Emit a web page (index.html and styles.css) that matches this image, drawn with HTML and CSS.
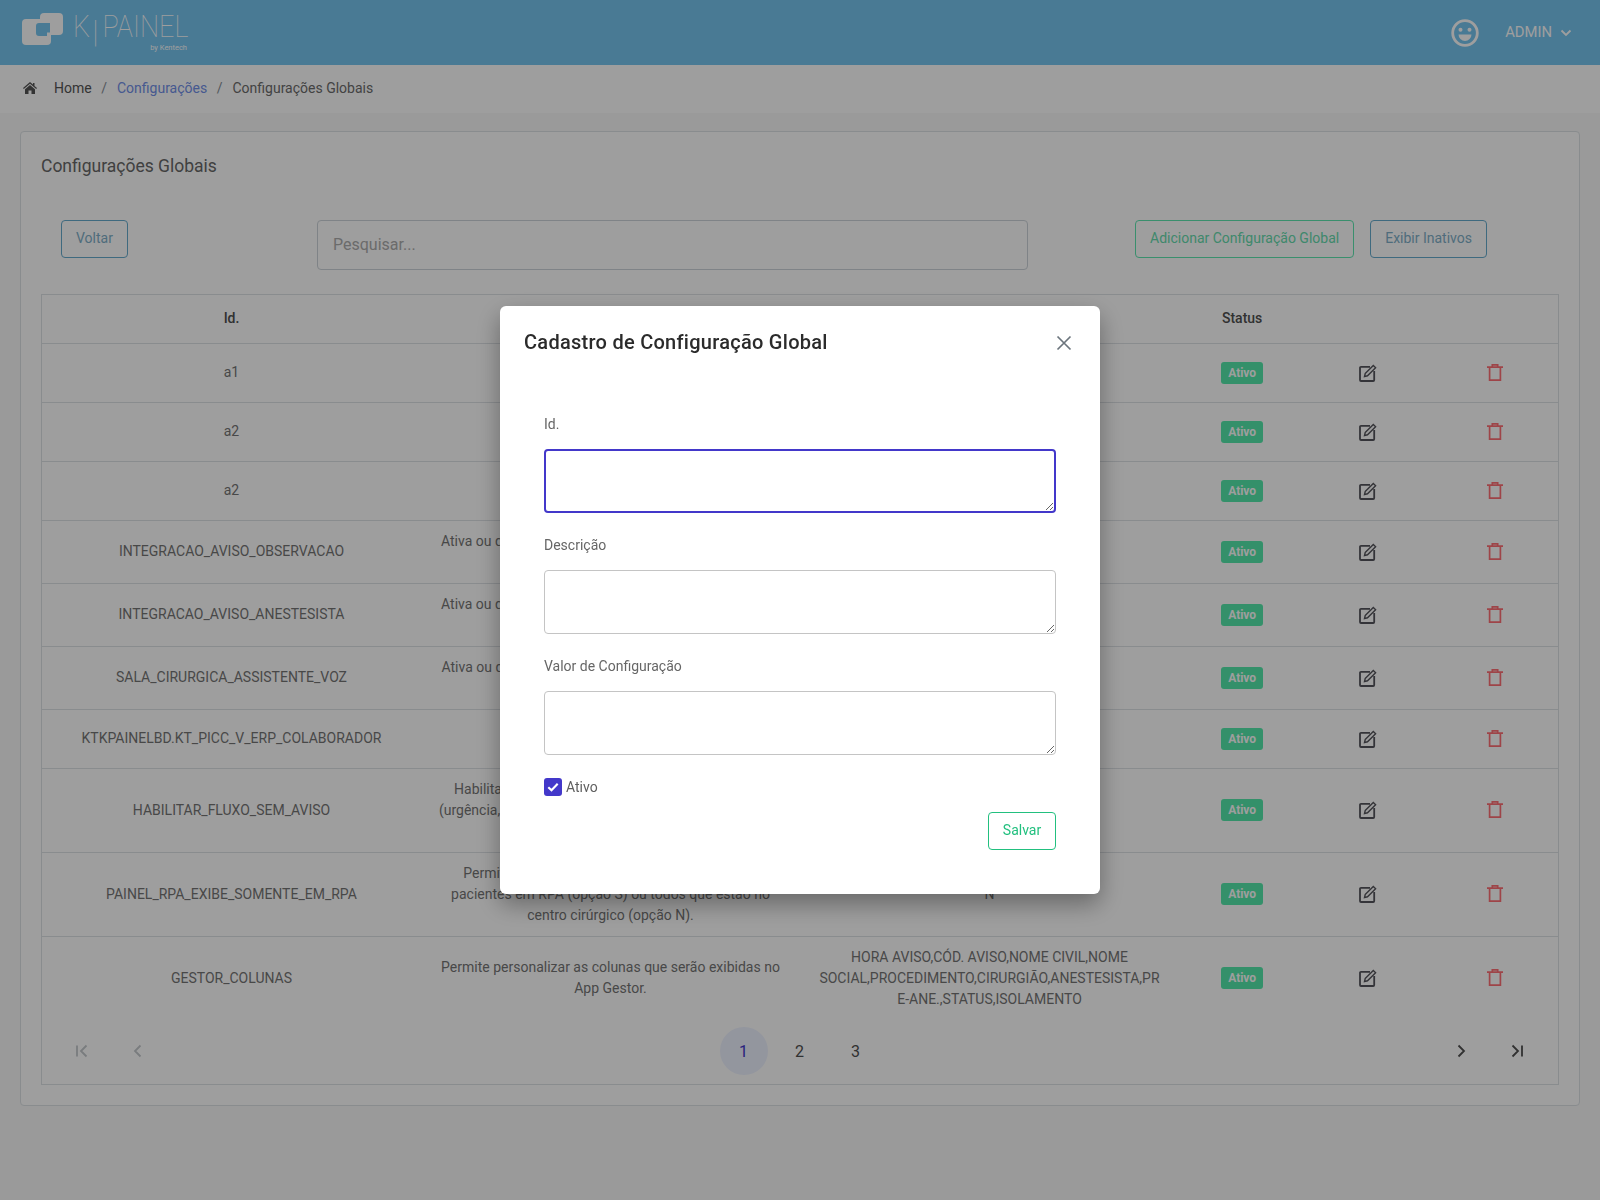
FILE: index.html
```html
<!DOCTYPE html>
<html lang="pt-BR">
<head>
<meta charset="utf-8">
<title>Configurações Globais</title>
<link rel="stylesheet" href="styles.css">
</head>
<body>
<header class="topbar">
  <div class="logo">
    <svg class="logo-mark" width="41" height="32" viewBox="0 0 41 32">
      <rect class="logo-fill" x="18" y="0" width="23" height="22" rx="4"/>
      <rect class="logo-fill" x="0" y="6" width="29" height="26" rx="4"/>
      <path class="logo-hole" d="M17 10h11v9.500h-3V23H17a3 3 0 0 1-3-3v-7a3 3 0 0 1 3-3z"/>
    </svg>
    <div class="logo-type">
      <div class="logo-name"><span>K</span><span class="logo-bar">|</span><span class="logo-word">PAINEL</span></div>
      <span class="logo-by">by Kentech</span>
    </div>
  </div>
  <div class="user">
    <svg class="smile" width="28" height="28" viewBox="0 0 28 28">
      <circle cx="14" cy="14" r="12.300" fill="none" stroke="currentColor" stroke-width="2.800"/>
      <circle cx="9.500" cy="10.800" r="2" fill="currentColor"/>
      <circle cx="18.500" cy="10.800" r="2" fill="currentColor"/>
      <path d="M7.500 15.500h13a6.500 6.500 0 0 1-13 0z" fill="currentColor"/>
    </svg>
    <span class="user-name">ADMIN</span>
    <svg width="12" height="8" viewBox="0 0 12 8"><path d="M1.500 1.500 6 6l4.500-4.500" fill="none" stroke="currentColor" stroke-width="1.800"/></svg>
  </div>
</header>

<nav class="crumbs">
  <svg class="crumb-home" width="14" height="12" viewBox="0 0 14 12"><path d="M7 0 0 6l.8 1L7 1.800 13.200 7l.8-1-2.500-2.100V1H10v1.600zM7 3 2 7.200V12h3.500V8.500h3V12H12V7.200z" fill="currentColor"/></svg>
  <span class="crumb-strong">Home</span>
  <span class="crumb-sep">/</span>
  <a class="crumb-link">Configurações</a>
  <span class="crumb-sep">/</span>
  <span class="crumb-text">Configurações Globais</span>
</nav>

<main class="card">
  <h1 class="card-title">Configurações Globais</h1>
  <div class="toolbar">
    <div class="tool-left"><button class="btn btn-blue">Voltar</button></div>
    <input class="search" placeholder="Pesquisar...">
    <div class="tool-right">
      <button class="btn btn-green">Adicionar Configuração Global</button>
      <button class="btn btn-blue">Exibir Inativos</button>
    </div>
  </div>

  <div class="table-box">
    <table class="grid">
      <colgroup>
        <col class="col-main"><col class="col-main"><col class="col-main"><col><col><col>
      </colgroup>
      <thead>
        <tr><th>Id.</th><th>Descrição</th><th>Valor de Configuração</th><th>Status</th><th></th><th></th></tr>
      </thead>
      <tbody id="rows"></tbody>
    </table>
    <div class="pager">
      <div class="pager-group">
        <button class="page-btn is-off"><svg width="14" height="14" viewBox="0 0 14 14"><path d="M2 1.500v11M11.500 1.500 6 7l5.500 5.500" fill="none" stroke="currentColor" stroke-width="1.800"/></svg></button>
        <button class="page-btn is-off"><svg width="14" height="14" viewBox="0 0 14 14"><path d="M9.500 1.500 4 7l5.500 5.500" fill="none" stroke="currentColor" stroke-width="1.800"/></svg></button>
      </div>
      <div class="pager-group">
        <button class="page-btn is-current">1</button>
        <button class="page-btn">2</button>
        <button class="page-btn">3</button>
      </div>
      <div class="pager-group">
        <button class="page-btn"><svg width="14" height="14" viewBox="0 0 14 14"><path d="M4.500 1.500 10 7l-5.500 5.500" fill="none" stroke="currentColor" stroke-width="1.800"/></svg></button>
        <button class="page-btn"><svg width="14" height="14" viewBox="0 0 14 14"><path d="M12 1.500v11M2.500 1.500 8 7l-5.500 5.500" fill="none" stroke="currentColor" stroke-width="1.800"/></svg></button>
      </div>
    </div>
  </div>
</main>

<div class="overlay">
  <section class="modal">
    <div class="modal-head">
      <h2 class="modal-title">Cadastro de Configuração Global</h2>
      <svg class="modal-close" width="16" height="16" viewBox="0 0 16 16"><path d="M1.500 1.500l13 13M14.500 1.500l-13 13" fill="none" stroke="currentColor" stroke-width="1.700"/></svg>
    </div>
    <form class="modal-form">
      <label class="field-label">Id.</label>
      <textarea class="field is-focused"></textarea>
      <label class="field-label">Descrição</label>
      <textarea class="field"></textarea>
      <label class="field-label">Valor de Configuração</label>
      <textarea class="field"></textarea>
      <div class="check-row">
        <span class="check"><svg width="12" height="10" viewBox="0 0 12 10"><path d="M1.300 5.200 4.500 8.300 10.700 1.700" fill="none" stroke="#fff" stroke-width="2.100"/></svg></span>
        <span class="check-label">Ativo</span>
      </div>
      <div class="form-actions"><button type="button" class="btn-save">Salvar</button></div>
    </form>
  </section>
</div>

<template id="row-tpl">
  <tr>
    <td class="c-id"></td>
    <td class="c-desc"></td>
    <td class="c-val"></td>
    <td><span class="badge">Ativo</span></td>
    <td><svg class="ico ico-edit" width="18" height="18" viewBox="0 0 18 18"><path d="M11 2.800H2a1 1 0 0 0-1 1V16a1 1 0 0 0 1 1h12.200a1 1 0 0 0 1-1V7" fill="none" stroke="currentColor" stroke-width="1.800"/><path d="M6.200 9.500 14.300 1.400l2.300 2.300-8.100 8.100-3 .7z" fill="none" stroke="currentColor" stroke-width="1.400"/></svg></td>
    <td><svg class="ico ico-red" width="18" height="18" viewBox="0 1 18 18"><path d="M1 4.200h16M6.300 4.200V1.800h5.400v2.400M3.600 4.200v13h10.800v-13" fill="none" stroke="currentColor" stroke-width="1.700"/></svg></td>
  </tr>
</template>
<script src="app.js"></script>
</body>
</html>
```

FILE: styles.css
```css
* { box-sizing: border-box; }
html, body { margin: 0; padding: 0; }
body {
  min-height: 1200px;
  background: #f8f8f8;
  font-family: Roboto, "Liberation Sans", sans-serif;
  font-size: 14px;
  line-height: 21px;
  color: #757575;
}
.topbar {
  height: 65px;
  background: #76c5ef;
  display: flex;
  align-items: center;
  justify-content: space-between;
  padding: 0 28px 0 22px;
}
.logo { display: flex; align-items: flex-start; gap: 10px; height: 65px; padding-top: 13px; }
.logo-mark { display: block; }
.logo-fill { fill: #fff; }
.logo-hole { fill: #76c5ef; }
.logo-type { display: flex; flex-direction: column; width: 114px; }
.logo-name {
  display: flex;
  align-items: flex-start;
  gap: 3px;
  height: 30px;
  font-weight: 100;
  font-size: 31px;
  line-height: 27px;
  color: #fff;
  white-space: nowrap;
  transform: scaleX(.87);
  transform-origin: left center;
}
.logo-bar { margin-top: 5px; margin-right: 2px; }
.logo-by { font-size: 7.500px; line-height: 10px; color: #fff; text-align: right; margin-top: 0; }
.user { display: flex; align-items: center; color: #fff; }
.smile { margin-right: 26px; }
.user-name { font-size: 14.800px; margin-right: 8px; }
.crumbs {
  height: 48px;
  background: #fff;
  display: flex;
  align-items: center;
  padding-left: 23px;
  padding-bottom: 2px;
}
.crumb-home { color: #555; margin-right: 17px; }
.crumb-strong { color: #555; }
.crumb-sep { margin: 0 10px 0 9.500px; color: #868e96; }
.crumb-link { color: #7290e8; }
.crumb-text { color: #6c6c6c; }
.card {
  margin: 18px 20px 0;
  background: #fff;
  border: 1px solid #dee2e6;
  border-radius: 4px;
  padding: 21px 20px 20px;
  height: 975px;
}
.card-title { margin: 0; font-size: 17.500px; line-height: 27px; font-weight: 400; color: #686868; }
.toolbar {
  margin-top: 40px;
  display: grid;
  grid-template-columns: 276px 711px 1fr;
  align-items: start;
  height: 74px;
}
.tool-left { padding-left: 20px; }
.tool-right { display: flex; gap: 16px; padding-left: 107px; }
.btn {
  height: 38px;
  padding: 0 14px 2px;
  background: transparent;
  border: 1px solid;
  border-radius: 4px;
  font: 400 14px/21px Roboto, "Liberation Sans", sans-serif;
  white-space: nowrap;
}
.btn-blue { color: #7fafc8; border-color: #66abce; }
.btn-green { color: #66dcae; border-color: #5ee7b1; }
.search {
  height: 50px;
  border: 1px solid #ced4da;
  border-radius: 4px;
  padding: 0 15px 2px;
  font: 400 16px Roboto, "Liberation Sans", sans-serif;
  background: #fff;
  outline: none;
}
.search::placeholder { color: #adadad; opacity: 1; }
.table-box { border: 1px solid #dee2e6; height: 791px; display: flex; flex-direction: column; }
.grid { width: 100%; border-collapse: collapse; table-layout: fixed; }
.col-main { width: 25%; }
.grid th {
  height: 48px;
  padding: 0 17.500px;
  font-weight: 500;
  color: #4f4f4f;
  text-align: center;
  border-bottom: 1px solid #dee2e6;
}
.grid td {
  padding: 10px 17.500px;
  text-align: center;
  border-bottom: 1px solid #dee2e6;
  height: 59px;
  overflow-wrap: anywhere;
}
.grid tbody tr:last-child td { border-bottom: 0; }
.badge {
  display: inline-block;
  height: 22px;
  width: 42px;
  border-radius: 3px;
  background: #55e8ab;
  color: #fff;
  font-size: 12px;
  font-weight: 700;
  line-height: 22px;
  vertical-align: middle;
}
.ico { display: block; margin: 0 auto; color: #55555c; }
.ico-red { color: #ff6f75; }
.pager {
  display: flex;
  justify-content: space-between;
  align-items: center;
  padding: 8px 17px 8px 16px;
  height: 63px;
}
.pager-group { display: flex; gap: 8px; }
.page-btn {
  width: 48px;
  height: 48px;
  border: 0;
  border-radius: 50%;
  background: transparent;
  display: flex;
  align-items: center;
  justify-content: center;
  font: 400 16px Roboto, "Liberation Sans", sans-serif;
  color: #4f4f4f;
  padding: 0;
}
.page-btn.is-off { color: #c4c8cc; }
.page-btn.is-current { background: #eef2ff; color: #4338ca; }
.overlay {
  position: fixed;
  inset: 0;
  background: rgba(0, 0, 0, .38);
  display: flex;
  justify-content: center;
  align-items: flex-start;
  padding-top: 306px;
}
.modal {
  width: 600px;
  height: 588px;
  background: #fff;
  border-radius: 6px;
  box-shadow: 0 10px 25px rgba(0, 0, 0, .35);
  padding: 24px 24px 0;
}
.modal-head { display: flex; align-items: center; justify-content: space-between; height: 25px; padding-right: 4px; }
.modal-title { margin: 0; font-size: 20px; line-height: 25px; font-weight: 500; letter-spacing: .27px; color: #2b2b2b; }
.modal-close { color: #6c757d; }
.modal-form { padding: 59px 20px 0; }
.field-label { display: block; height: 21px; margin-bottom: 14px; color: #666; }
.field {
  display: block;
  width: 100%;
  height: 64px;
  margin-bottom: 22px;
  border: 1px solid #c4c4c4;
  border-radius: 4px;
  background: #fff;
  outline: none;
}
.field:last-of-type { margin-bottom: 21px; }
.field.is-focused { border: 2px solid #4338ca; }
.check-row { display: flex; align-items: center; gap: 4px; height: 21px; }
.check {
  width: 18px;
  height: 18px;
  border-radius: 3px;
  background: #4338ca;
  display: flex;
  align-items: center;
  justify-content: center;
}
.check-label { color: #5f5f5f; padding-top: 2px; }
.form-actions { display: flex; justify-content: flex-end; margin-top: 15px; }
.btn-save {
  height: 38px;
  width: 68px;
  background: #fff;
  border: 1px solid #22c07f;
  border-radius: 4px;
  color: #22c07f;
  font: 400 14px Roboto, "Liberation Sans", sans-serif;
  padding: 0 0 2px;
}
```

FILE: app.js
```js
var rows = [
  ["a1", "Configuração a1", "S"],
  ["a2", "Configuração a2", "S"],
  ["a2", "Configuração a2", "S"],
  ["INTEGRACAO_AVISO_OBSERVACAO", "Ativa ou desativa a integração da observação do Aviso de cirurgia", "S"],
  ["INTEGRACAO_AVISO_ANESTESISTA", "Ativa ou desativa a integração do anestesista do Aviso de cirurgia", "S"],
  ["SALA_CIRURGICA_ASSISTENTE_VOZ", "Ativa ou desativa o assistente de voz na Sala Cirúrgica do hospital", "S"],
  ["KTKPAINELBD.KT_PICC_V_ERP_COLABORADOR", "Tabela de colaboradores", "S"],
  ["HABILITAR_FLUXO_SEM_AVISO", "Habilita o fluxo de atendimento para cirurgias sem (urgência, emergência) aviso prévio no painel do centro cirúrgico.", "S"],
  ["PAINEL_RPA_EXIBE_SOMENTE_EM_RPA", "Permite definir se o painel irá exibir somente os pacientes em RPA (opção S) ou todos que estão no centro cirúrgico (opção N).", "N"],
  ["GESTOR_COLUNAS", "Permite personalizar as colunas que serão exibidas no App Gestor.", "HORA AVISO,CÓD. AVISO,NOME CIVIL,NOME SOCIAL,PROCEDIMENTO,CIRURGIÃO,ANESTESISTA,PRE-ANE.,STATUS,ISOLAMENTO"]
];
var tbody = document.getElementById("rows");
var tpl = document.getElementById("row-tpl");
rows.forEach(function (r) {
  var node = tpl.content.cloneNode(true);
  node.querySelector(".c-id").textContent = r[0];
  node.querySelector(".c-desc").textContent = r[1];
  node.querySelector(".c-val").textContent = r[2];
  tbody.appendChild(node);
});
```
